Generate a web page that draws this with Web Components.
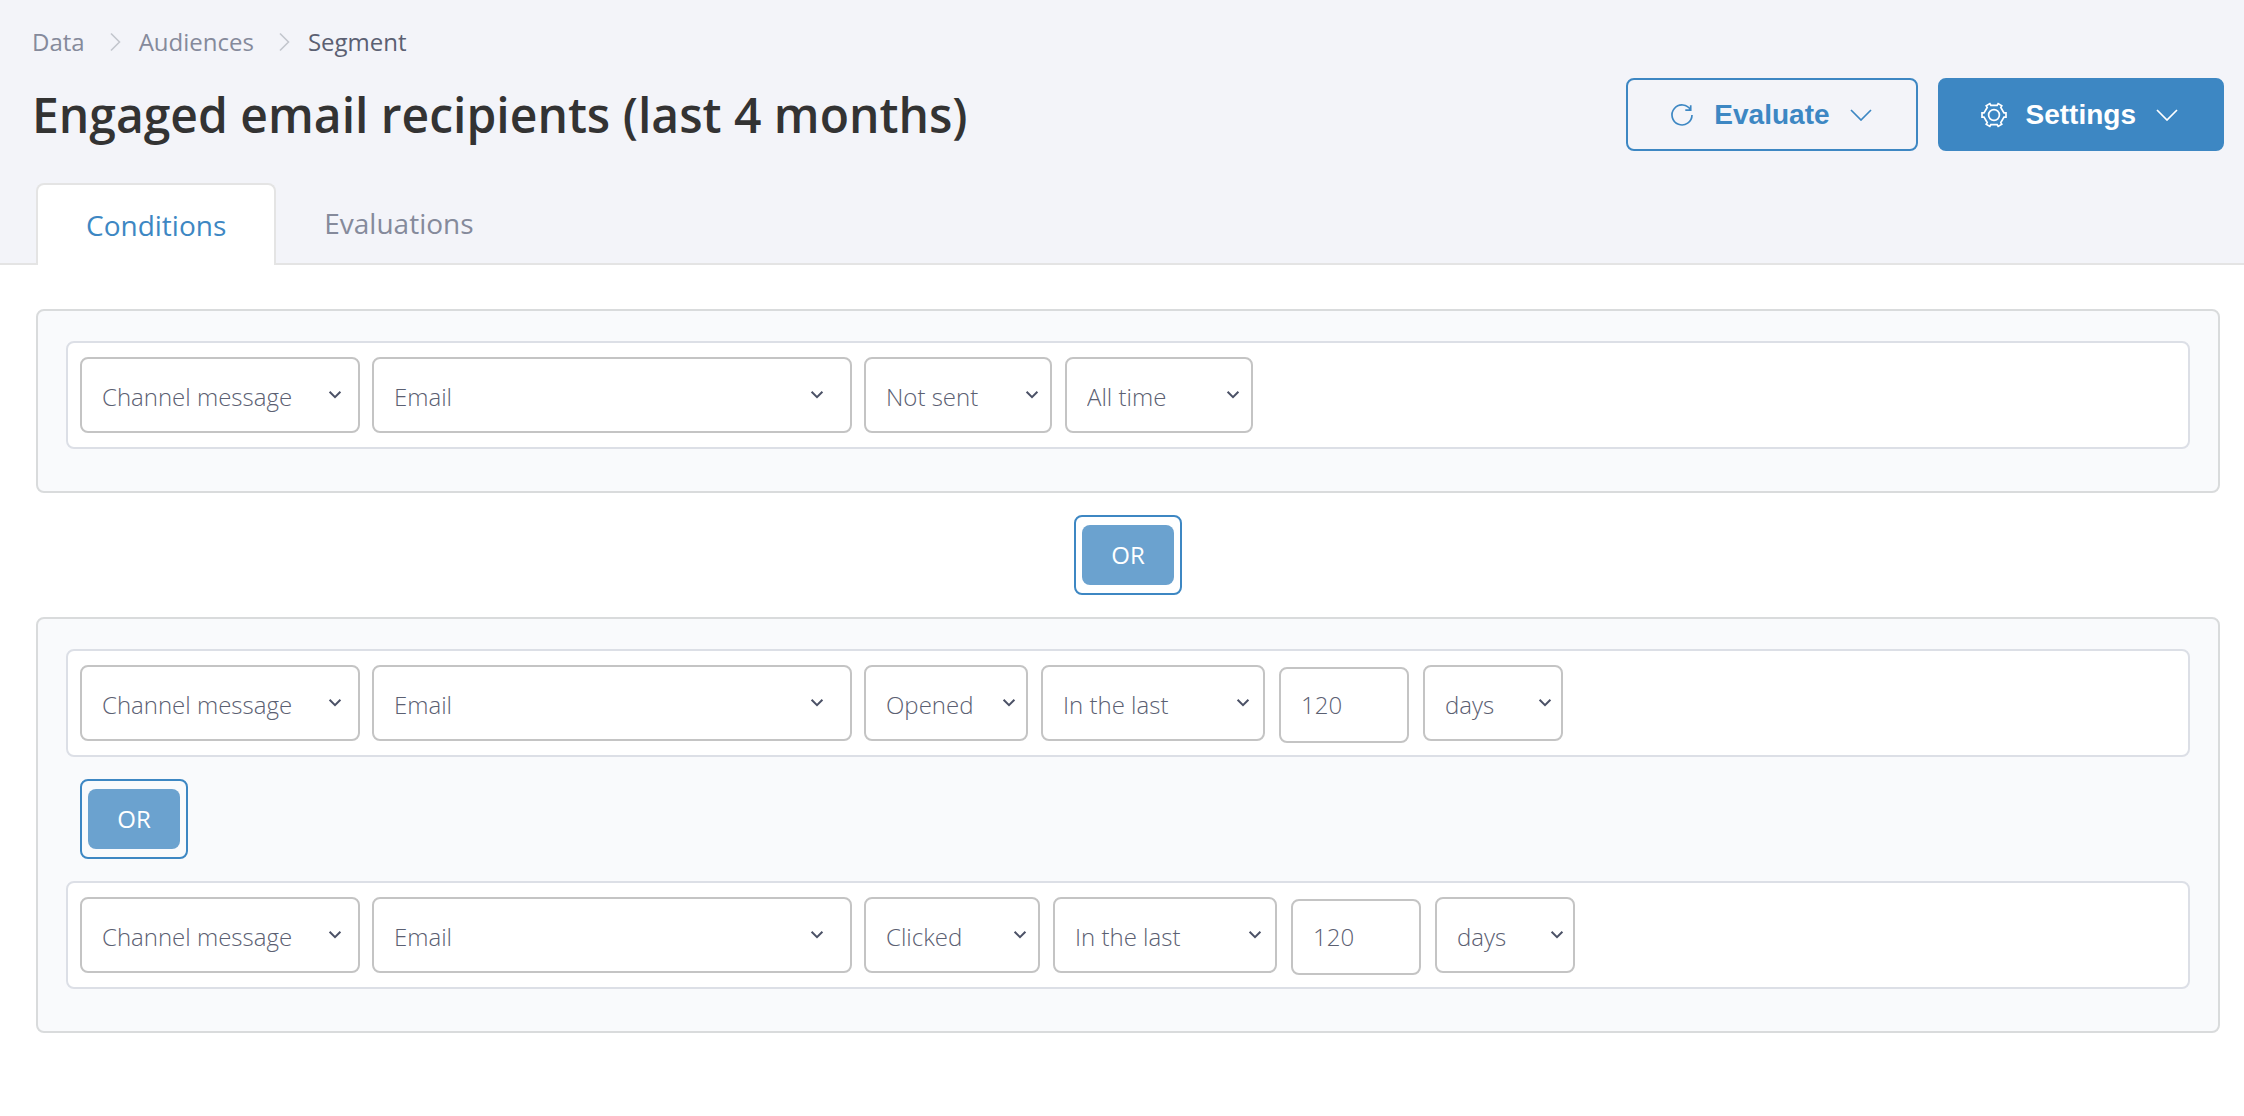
<!DOCTYPE html>
<html lang="en">
<head>
<meta charset="utf-8">
<title>Engaged email recipients (last 4 months)</title>
<style>
body {
  margin: 0;
  background: #fff;
  color: #858a9b;
  font: 24px/32px "Open Sans", "Liberation Sans", sans-serif;
  --accent: #3d87c3;
  --text: #5b6072;
}
</style>
</head>
<body>
<segment-page>
  <bread-crumbs slot="crumbs">
    <crumb-item href="#data">Data</crumb-item>
    <crumb-item href="#audiences">Audiences</crumb-item>
    <crumb-item current>Segment</crumb-item>
  </bread-crumbs>
  <span slot="title">Engaged email recipients (last 4 months)</span>
  <action-button slot="actions" icon="refresh">Evaluate</action-button>
  <action-button slot="actions" icon="cog" primary>Settings</action-button>
  <tab-item slot="tabs" selected>Conditions</tab-item>
  <tab-item slot="tabs">Evaluations</tab-item>

  <condition-group>
    <condition-row verb="Not sent" period="All time"></condition-row>
  </condition-group>
  <operator-toggle>OR</operator-toggle>
  <condition-group>
    <condition-row verb="Opened" period="In the last" amount="120" unit="days"></condition-row>
    <operator-toggle nested>OR</operator-toggle>
    <condition-row verb="Clicked" period="In the last" amount="120" unit="days"></condition-row>
  </condition-group>
</segment-page>

<script>
"use strict";

const ICONS = {
  refresh: `<svg width="26" height="26" viewBox="0 0 26 26"><path d="M23 13A10 10 0 1 1 21.7 8M21.7 3.2V8.2H16.3"/></svg>`,
  cog: `<svg width="26" height="26" viewBox="0 0 26 26"><circle cx="13" cy="13" r="5.4"/><path d="M16.2 3.3L17.2 1.6L20.8 3.7L19.8 5.4L23 10.9H25V15.1H23L19.8 20.6L20.8 22.3L17.2 24.4L16.2 22.7H9.8L8.8 24.4L5.2 22.3L6.2 20.6L3 15.1H1V10.9H3L6.2 5.4L5.2 3.7L8.8 1.6L9.8 3.3Z"/></svg>`,
};

// Attaches an open shadow root with the given styles and markup.
function define(tag, css, render) {
  window.customElements.define(tag, class extends HTMLElement {
    constructor() {
      super();
      this.attachShadow({ mode: "open" });
    }
    connectedCallback() {
      const template = document.createElement("template");
      template.innerHTML = `<style>*{box-sizing:border-box}${css}</style>${render(this)}`;
      this.shadowRoot.replaceChildren(template.content.cloneNode(true));
    }
  });
}

define("segment-page", `
  :host { display: block; }
  header {
    padding: 26px 20px 0 32px;
    background: #f3f4f9;
    box-shadow: inset 0 -2px #e4e4e4;
  }
  .heading {
    display: flex;
    align-items: center;
    justify-content: space-between;
    margin-top: 20px;
  }
  h1 {
    margin: 0;
    color: #333;
    font-size: 48px;
    font-weight: 600;
    line-height: 64px;
  }
  .actions { display: flex; gap: 20px; }
  .tabs { display: flex; margin: 32px 0 0 4px; }
  main {
    display: flex;
    flex-direction: column;
    gap: 22px;
    padding: 44px 24px 44px 36px;
  }
`, () => `
  <header>
    <slot name="crumbs"></slot>
    <div class="heading">
      <h1><slot name="title"></slot></h1>
      <div class="actions"><slot name="actions"></slot></div>
    </div>
    <div class="tabs" role="tablist"><slot name="tabs"></slot></div>
  </header>
  <main><slot></slot></main>
`);

define("bread-crumbs", `
  :host { display: block; }
  nav { display: flex; }
`, () => `<nav aria-label="Breadcrumb"><slot></slot></nav>`);

define("crumb-item", `
  :host { display: flex; align-items: center; }
  :host([current]) { color: var(--text); }
  a { color: inherit; text-decoration: none; }
  svg { margin: 0 18px 0 25px; fill: none; stroke: #c3c6cd; stroke-width: 1.6; }
`, (el) => el.hasAttribute("current")
  ? `<span aria-current="page"><slot></slot></span>`
  : `<a href="${el.getAttribute("href")}"><slot></slot></a>
     <svg width="11" height="20" viewBox="0 0 11 20"><path d="M1 1.5L9.5 10L1 18.5"/></svg>`);

define("action-button", `
  :host { display: block; }
  button {
    display: flex;
    align-items: center;
    padding: 18px 44px 18px 41px;
    border: 2px solid var(--accent);
    border-radius: 8px;
    background: transparent;
    color: var(--accent);
    font: bold 28px/33px "Liberation Sans", Arial, sans-serif;
    cursor: pointer;
  }
  :host([primary]) button { background: var(--accent); color: #fff; }
  svg { fill: none; stroke: currentColor; stroke-width: 1.7; }
  span { margin: 0 20px 0 19px; }
`, (el) => `
  <button type="button" aria-haspopup="menu">
    ${ICONS[el.getAttribute("icon")]}
    <span><slot></slot></span>
    <svg width="22" height="12" viewBox="0 0 22 12"><path d="M1 1L11 11L21 1"/></svg>
  </button>
`);

define("tab-item", `
  :host { display: block; }
  button {
    display: block;
    height: 82px;
    padding: 0 48px;
    border: 0 solid transparent;
    border-bottom-width: 2px;
    background: none;
    color: inherit;
    font: inherit;
    font-size: 28px;
    cursor: pointer;
  }
  :host([selected]) button {
    border: 2px solid #e4e4e4;
    border-bottom: 0;
    border-radius: 8px 8px 0 0;
    background: #fff;
    color: var(--accent);
  }
`, (el) => `
  <button type="button" role="tab" aria-selected="${el.hasAttribute("selected")}"><slot></slot></button>
`);

define("condition-group", `
  :host {
    display: flex;
    flex-direction: column;
    gap: 22px;
    box-sizing: border-box;
    padding: 30px 28px 42px;
    border: 2px solid #d9dbdc;
    border-radius: 8px;
    background: #f9fafc;
  }
`, () => `<slot></slot>`);

define("operator-toggle", `
  :host { display: block; align-self: center; }
  :host([nested]) { align-self: flex-start; margin-left: 14px; }
  button {
    display: block;
    padding: 8px 6px;
    border: 2px solid var(--accent);
    border-radius: 8px;
    background: none;
    color: #fff;
    font: inherit;
    cursor: pointer;
  }
  span {
    display: block;
    min-width: 92px;
    padding: 14px 0;
    border-radius: 8px;
    background: #6ba2cf;
  }
`, () => `<button type="button"><span><slot></slot></span></button>`);

define("condition-row", `
  :host {
    display: block;
    box-sizing: border-box;
    min-height: 108px;
    padding: 14px 12px 12px;
    border: 2px solid #dcdfe6;
    border-radius: 8px;
    background: #fff;
  }
  form, .when { display: flex; align-items: baseline; gap: 12px; }
  .when { gap: 13px; }
  input {
    width: 130px;
    height: 76px;
    margin: 0 1px;
    padding: 0 20px;
    border: 2px solid #c4c4c4;
    border-radius: 8px;
    background: #fff;
    color: var(--text);
    font: inherit;
    font-weight: 300;
  }
`, (el) => {
  const { verb, period, amount, unit } = Object.fromEntries(
    [...el.attributes].map((a) => [a.name, a.value]));
  return `
    <form>
      <drop-down label="Event type" value="Channel message" size="wide"></drop-down>
      <drop-down label="Channel" value="Email" size="full"></drop-down>
      <div class="when">
        <drop-down label="Status" value="${verb}" size="${verb.toLowerCase().replace(" ", "-")}"></drop-down>
        <drop-down label="Period" value="${period}" size="${amount ? "period" : "all-time"}"></drop-down>
        ${amount ? `
          <input type="text" inputmode="numeric" aria-label="Amount" value="${amount}">
          <drop-down label="Unit" value="${unit}" size="unit"></drop-down>` : ""}
      </div>
    </form>`;
});

define("drop-down", `
  :host { display: grid; width: 188px; }
  :host([size="wide"]) { width: 280px; }
  :host([size="full"]) { width: 480px; }
  :host([size="opened"]) { width: 164px; }
  :host([size="clicked"]) { width: 176px; }
  :host([size="period"]) { width: 224px; }
  :host([size="unit"]) { width: 140px; }
  select {
    grid-area: 1 / 1;
    appearance: none;
    height: 76px;
    margin: 0;
    padding: 4px 20px 0;
    border: 2px solid #c4c4c4;
    border-radius: 8px;
    background: #fff;
    color: var(--text);
    font: inherit;
    font-weight: 300;
  }
  /* the arrow moves inwards as the box gets wider */
  svg {
    grid-area: 1 / 1;
    place-self: center end;
    margin-right: 5%;
    fill: none;
    stroke: #4b5166;
    stroke-width: 2;
    pointer-events: none;
  }
`, (el) => `
  <select aria-label="${el.getAttribute("label")}"><option>${el.getAttribute("value")}</option></select>
  <svg width="22" height="22" viewBox="0 0 22 22"><path d="M5.6 7.8L11 13.2L16.4 7.8"/></svg>
`);
</script>
</body>
</html>
